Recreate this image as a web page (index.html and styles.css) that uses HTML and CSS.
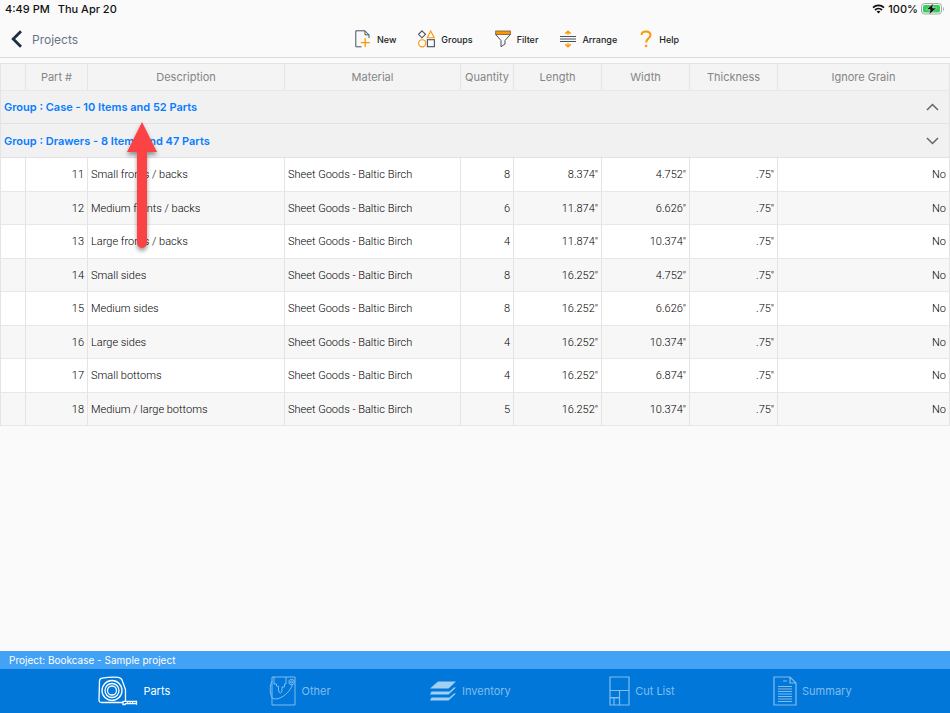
FILE: index.html
```html
<!DOCTYPE html>
<html lang="en">
<head>
  <meta charset="UTF-8"/>
  <meta name="viewport" content="width=device-width, initial-scale=1.0"/>
  <title>Parts</title>
  <link rel="stylesheet" href="styles.css">
</head>
<body>
<div class="status-bar">
  <span>4:49 PM</span>
  <span>Thu Apr 20</span>
  <div class="status-right">
    <svg width="13" height="10" viewBox="0 0 13 10" fill="none" stroke="#111" stroke-width="1.8">
      <path d="M1 3.6a8 8 0 0 1 11 0M3 6a5 5 0 0 1 7 0"/>
      <path d="M4.6 7.5a3 3 0 0 1 3.8 0L6.5 9.6z" fill="#111" stroke="none"/>
    </svg>
    <span>100%</span>
    <svg width="24" height="12" viewBox="0 0 24 12">
      <rect x="0.5" y="0.5" width="20" height="10.5" rx="3" fill="#fafafa" stroke="#a5a5a5"/>
      <rect x="2" y="2" width="17" height="7.5" rx="1.6" fill="#30d158"/>
      <path d="M22 4v4c1.3-.5 1.3-3.5 0-4z" fill="#a5a5a5"/>
      <path d="M12.5 .3L5.3 6.6h3.9L8 11.700 15.700 5h-4.200z" fill="#111" stroke="#fff" stroke-width=".5"/>
    </svg>
  </div>
</div>
<header class="top-bar">
  <a href="#" class="back-link">
    <svg width="11" height="18" viewBox="0 0 11 18" fill="none" stroke="#1f2d45" stroke-width="2.8">
      <path d="M10 1.2L2.2 9 10 16.8"/>
    </svg>
    Projects
  </a>
  <nav class="toolbar">
    <button class="tool-btn">
      <svg width="16" height="18" viewBox="0 0 16 18" fill="none">
        <path d="M6.5 16.8H.8V.8H10L14 4.8V8M10 .8V4.8H14" stroke="#46505f"/>
        <path d="M10.2 8.2V17M5.8 12.6H14.8" stroke="#ff9500" stroke-width="1.3"/>
      </svg>
      New
    </button>
    <button class="tool-btn">
      <svg width="17" height="18" viewBox="0 0 17 18" fill="none" stroke-width="1.1">
        <path d="M4 .8L7.5 4.3 4 7.8.5 4.3z" stroke="#46505f"/>
        <path d="M12.7 1L16.2 7.7H9.2z" stroke="#ff9500"/>
        <circle cx="4.2" cy="13.3" r="3.6" stroke="#ff9500"/>
        <rect x="9.4" y="9.7" width="7" height="7" stroke="#46505f"/>
      </svg>
      Groups
    </button>
    <button class="tool-btn">
      <svg width="16" height="18" viewBox="0 0 16 18">
        <path d="M.7 4.5L6 10.5V16.7L10 14V10.5L15.3 4.5" fill="none" stroke="#46505f"/>
        <rect x=".7" y="1" width="14.6" height="3.6" fill="#ff9500" stroke="#6e5a3c" stroke-width=".8"/>
      </svg>
      Filter
    </button>
    <button class="tool-btn">
      <svg width="16" height="18" viewBox="0 0 16 18" fill="none">
        <path d="M0 6.5H16M0 9H16M0 11.5H16" stroke="#46505f" stroke-width="1.2"/>
        <path d="M8 5V1.5M5.2 3.8L8 1.2 10.8 3.8M8 13V16.5M5.2 14.2L8 16.8 10.8 14.2" stroke="#ff9500" stroke-width="1.3"/>
      </svg>
      Arrange
    </button>
    <button class="tool-btn">
      <svg width="14" height="18" viewBox="0 0 14 18">
        <path d="M2.5 5C2.5 2.7 4.3 1.4 6.9 1.4s4.6 1.4 4.6 3.7c0 3.2-4.3 3.3-4.3 7.3" fill="none" stroke="#ff9500" stroke-width="2"/>
        <circle cx="7.1" cy="16" r="1.3" fill="#ff9500"/>
      </svg>
      Help
    </button>
  </nav>
</header>
<main class="content">
  <table class="parts">
    <colgroup>
      <col class="col-mark"><col class="col-part"><col class="col-desc"><col class="col-material"><col class="col-qty"><col class="col-size"><col class="col-size"><col class="col-size"><col>
    </colgroup>
    <thead>
      <tr>
        <th></th><th>Part #</th><th>Description</th><th>Material</th><th>Quantity</th><th>Length</th><th>Width</th><th>Thickness</th><th>Ignore Grain</th>
      </tr>
    </thead>
    <tbody>
      <tr class="group">
        <td colspan="9">
          <button class="group-btn">
            Group : Case - 10 Items and 52 Parts
            <svg width="13" height="8" viewBox="0 0 13 8" fill="none" stroke="#666" stroke-width="1.5"><path d="M1 7L6.5 1.5 12 7"/></svg>
          </button>
        </td>
      </tr>
      <tr class="group">
        <td colspan="9">
          <button class="group-btn">
            Group : Drawers - 8 Items and 47 Parts
            <svg width="13" height="8" viewBox="0 0 13 8" fill="none" stroke="#666" stroke-width="1.5"><path d="M1 1L6.5 6.5 12 1"/></svg>
          </button>
        </td>
      </tr>
    </tbody>
    <tbody class="items">
      <tr><td></td><td class="num">11</td><td>Small fronts / backs</td><td>Sheet Goods - Baltic Birch</td><td class="num">8</td><td class="num">8.374"</td><td class="num">4.752"</td><td class="num">.75"</td><td class="num">No</td></tr>
      <tr><td></td><td class="num">12</td><td>Medium fronts / backs</td><td>Sheet Goods - Baltic Birch</td><td class="num">6</td><td class="num">11.874"</td><td class="num">6.626"</td><td class="num">.75"</td><td class="num">No</td></tr>
      <tr><td></td><td class="num">13</td><td>Large fronts / backs</td><td>Sheet Goods - Baltic Birch</td><td class="num">4</td><td class="num">11.874"</td><td class="num">10.374"</td><td class="num">.75"</td><td class="num">No</td></tr>
      <tr><td></td><td class="num">14</td><td>Small sides</td><td>Sheet Goods - Baltic Birch</td><td class="num">8</td><td class="num">16.252"</td><td class="num">4.752"</td><td class="num">.75"</td><td class="num">No</td></tr>
      <tr><td></td><td class="num">15</td><td>Medium sides</td><td>Sheet Goods - Baltic Birch</td><td class="num">8</td><td class="num">16.252"</td><td class="num">6.626"</td><td class="num">.75"</td><td class="num">No</td></tr>
      <tr><td></td><td class="num">16</td><td>Large sides</td><td>Sheet Goods - Baltic Birch</td><td class="num">4</td><td class="num">16.252"</td><td class="num">10.374"</td><td class="num">.75"</td><td class="num">No</td></tr>
      <tr><td></td><td class="num">17</td><td>Small bottoms</td><td>Sheet Goods - Baltic Birch</td><td class="num">4</td><td class="num">16.252"</td><td class="num">6.874"</td><td class="num">.75"</td><td class="num">No</td></tr>
      <tr><td></td><td class="num">18</td><td>Medium / large bottoms</td><td>Sheet Goods - Baltic Birch</td><td class="num">5</td><td class="num">16.252"</td><td class="num">10.374"</td><td class="num">.75"</td><td class="num">No</td></tr>
    </tbody>
  </table>
  <svg class="pointer" width="30" height="127" viewBox="0 0 30 127">
    <path d="M15 0L30 30H20V121a5 5 0 0 1-10 0V30H0z" fill="#fb4245"/>
  </svg>
</main>
<div class="project-bar">Project: Bookcase - Sample project</div>
<nav class="tab-bar">
  <a href="#" class="tab active">
    <svg width="40" height="30" viewBox="0 0 40 30" fill="none" stroke="#fff" stroke-width="1.3">
      <path d="M25 26.5H3.5Q1 26.5 1 24L1.5 5Q1.7 2.5 4 2.2Q12 .8 20 1.3Q23 1.5 24 4L27.500 13.500V25.500"/>
      <circle cx="14" cy="14.5" r="10"/>
      <circle cx="14" cy="14.5" r="7"/>
      <circle cx="14" cy="14.5" r="4.5"/>
      <path d="M25 25.3H38.5V28.8M25 25V28.5H27L28 27.5H38"/>
      <path d="M29.5 26v2M32 26v2M34.5 26v2" stroke-width=".8"/>
    </svg>
    Parts
  </a>
  <a href="#" class="tab">
    <svg width="28" height="30" viewBox="0 0 28 30" fill="none" stroke="currentColor">
      <path d="M3 5V1H26V29H3V18"/>
      <path d="M5 1V8H7.5V10Q8.5 11 9.5 10V14Q10 17 11.5 17Q13 17 13 14V11H15.5V8H17V1"/>
      <circle cx="22.5" cy="6" r="2.7"/>
      <circle cx="22.5" cy="6" r="1"/>
      <path d="M3 5C.5 9 .5 20 4 22.5C10 25 21 17 23.5 8.5M3 18V5"/>
    </svg>
    Other
  </a>
  <a href="#" class="tab">
    <svg width="28" height="22" viewBox="0 0 28 22" fill="#a3cff3">
      <path d="M9 1.500H27L19.500 8.500H1z"/>
      <path d="M2.500 11.500H20.500L25 7.500H27L19.500 14.500H1z"/>
      <path d="M2.500 17.500H20.500L25 13.500H27L19.500 20.500H1z"/>
    </svg>
    Inventory
  </a>
  <a href="#" class="tab">
    <svg width="21" height="30" viewBox="0 0 21 30" fill="none" stroke="currentColor" stroke-width="1.2">
      <path d="M1 1H20V29H1zM1 14.5H20M10.5 14.5V29M1 21.5H10.5M5 21.5V29M10.5 22H1"/>
    </svg>
    Cut List
  </a>
  <a href="#" class="tab">
    <svg width="24" height="30" viewBox="0 0 24 30" fill="none" stroke="currentColor">
      <path d="M1 1H17L23 7V29H1zM17 1V7H23" stroke-width="1.2"/>
      <path d="M10 5H14M5 10.5H19M5 13H19M5 15.5H19M5 18H19M5 20.5H19M5 23H19M5 25.5H19"/>
    </svg>
    Summary
  </a>
</nav>
</body>
</html>
```
FILE: styles.css
```css
* {
  box-sizing: border-box;
}
body {
  margin: 0;
  min-height: 100vh;
  display: flex;
  flex-direction: column;
  font-family: Inter, "Liberation Sans", sans-serif;
  background-color: #fafafa;
  color: #111;
}
a {
  text-decoration: none;
}
button {
  font-family: inherit;
  border: none;
  background: none;
  padding: 0;
  cursor: pointer;
}
svg {
  flex: none;
}
.status-bar {
  display: flex;
  gap: 8px;
  height: 18px;
  padding: 0 5px;
  font-size: 11px;
  font-weight: 500;
  line-height: 18px;
}
.status-right {
  display: flex;
  align-items: center;
  gap: 3px;
  margin-left: auto;
}
.top-bar {
  display: flex;
  align-items: center;
  height: 40px;
  border-bottom: 1px solid #d9d9d9;
}
.back-link {
  display: flex;
  align-items: center;
  gap: 10px;
  width: 84px;
  height: 40px;
  padding: 3px 0 0 11px;
  font-size: 12px;
  color: #697386;
}
.toolbar {
  flex: 1;
  display: flex;
  justify-content: center;
  gap: 22px;
}
.tool-btn {
  display: flex;
  align-items: center;
  gap: 6px;
  height: 40px;
  padding-top: 3px;
  font-size: 9px;
  font-weight: 500;
  color: #222;
}
.content {
  position: relative;
  flex: 1;
  padding-top: 5px;
}
.parts {
  width: 100%;
  table-layout: fixed;
  border-collapse: separate;
  border-spacing: 0;
  border-left: 1px solid #e4e4e4;
}
.col-mark {
  width: 25px;
}
.col-part {
  width: 62px;
}
.col-desc {
  width: 197px;
}
.col-material {
  width: 176px;
}
.col-qty {
  width: 53px;
}
.col-size {
  width: 88px;
}
.parts th,
.parts td {
  padding: 0 3px;
  border-right: 1px solid #e4e4e4;
  border-bottom: 1px solid #e8e8e8;
  white-space: nowrap;
}
.parts th {
  height: 28px;
  border-top: 1px solid #e4e4e4;
  background-color: #f4f4f4;
  font-size: 11px;
  font-weight: 400;
  color: #858585;
}
.parts .group td {
  height: 33px;
  padding: 0;
  background-color: #f1f1f1;
  border-bottom-color: #e2e2e2;
}
.parts .group:last-child td {
  height: 34px;
}
.group-btn {
  display: flex;
  align-items: center;
  justify-content: space-between;
  width: 100%;
  height: 32px;
  padding: 0 10px 0 3px;
  font-size: 11px;
  font-weight: 600;
  color: #087cff;
}
.items td {
  height: 34px;
  background-color: #fff;
  font-family: Roboto, "Liberation Sans", sans-serif;
  font-size: 11px;
  font-weight: 300;
  color: #000;
}
.items tr:nth-child(even) td {
  height: 33px;
  background-color: #f7f7f7;
}
.items .num {
  text-align: right;
}
.pointer {
  position: absolute;
  top: 64px;
  left: 127px;
  overflow: visible;
  filter: drop-shadow(0 3px 2px rgba(0,0,0,0.4));
}
.project-bar {
  height: 18px;
  padding-left: 9px;
  background-color: #42a2f5;
  color: #fff;
  font-size: 10px;
  line-height: 18px;
}
.tab-bar {
  display: flex;
  justify-content: space-evenly;
  height: 44px;
  background-color: #0077d9;
}
.tab {
  display: flex;
  align-items: center;
  gap: 5px;
  font-size: 11px;
  color: #80bdee;
}
.tab.active {
  color: #fff;
}
```
